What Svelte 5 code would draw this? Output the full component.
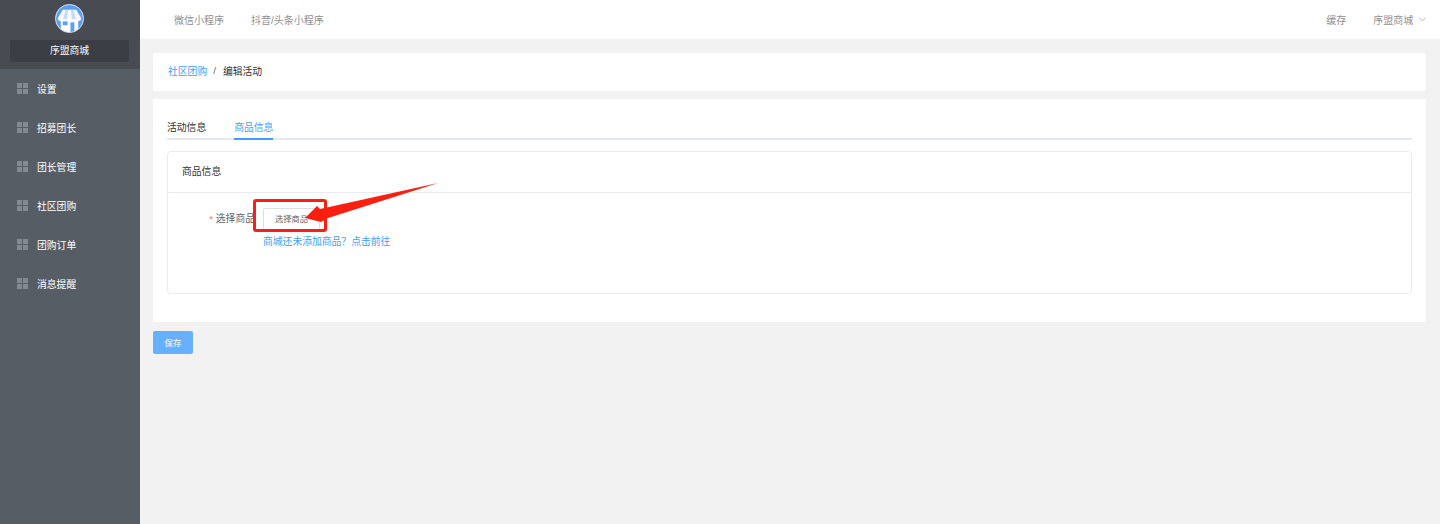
<script>
  const menu = ["设置", "招募团长", "团长管理", "社区团购", "团购订单", "消息提醒"];
</script>

<div class="layout">
  <aside class="sidebar">
    <div class="brand">
      <svg class="logo" width="29" height="29" viewBox="0 0 30 30">
        <defs>
          <clipPath id="round"><circle cx="15" cy="15" r="14" /></clipPath>
        </defs>
        <circle cx="15" cy="15" r="14.5" fill="#5a9ff5" stroke="#dfe3e8" />
        <g clip-path="url(#round)">
          <rect x="6" y="15" width="18" height="15" fill="#fff" />
          <path d="M8 6h14l5 8.500a3 3 0 0 1-6 .5 3 3 0 0 1-6 0 3 3 0 0 1-6 0 3 3 0 0 1-6-.5z" fill="#f6f9fe" />
          <path d="M11 6h2.500l-1 9.500h-4zM16.500 6H19l2.500 9.500h-4z" fill="#c5dafa" />
          <rect x="8" y="18" width="5" height="4" fill="#5a9ff5" />
          <rect x="16" y="19" width="4" height="11" fill="#5a9ff5" />
        </g>
      </svg>
      <div class="shop">序盟商城</div>
    </div>
    <nav>
      {#each menu as item}
        <div class="item">
          <span class="grid"><i></i><i></i><i></i><i></i></span>
          <span>{item}</span>
        </div>
      {/each}
    </nav>
  </aside>

  <div class="right">
    <header class="top">
      <div class="links">
        <span>微信小程序</span>
        <span>抖音/头条小程序</span>
      </div>
      <div class="user">
        <span>缓存</span>
        <span class="account">序盟商城
          <svg width="7" height="5" viewBox="0 0 8 5"><path d="M.5.5 4 4 7.5.5" fill="none" stroke="#a9b0bb" /></svg>
        </span>
      </div>
    </header>

    <main>
      <div class="crumb">
        <span class="link">社区团购</span>
        <span class="sep">/</span>
        <span>编辑活动</span>
      </div>

      <section class="panel">
        <div class="tabs">
          <span class="tab">活动信息</span>
          <span class="tab active">商品信息</span>
        </div>
        <div class="card">
          <div class="card-head">商品信息</div>
          <div class="card-body">
            <div class="label"><span class="star">*</span> 选择商品</div>
            <div class="field">
              <button class="pick" type="button">选择商品</button>
              <span class="link hint">商城还未添加商品？点击前往</span>
            </div>
            <div class="mark"></div>
            <svg class="arrow" width="140" height="42" viewBox="0 0 140 42">
              <path d="M134 0 16 26 13 23 1 35 17 39 24 35Z" fill="#fb1f12" />
            </svg>
          </div>
        </div>
      </section>

      <button class="save" type="button">保存</button>
    </main>
  </div>
</div>

<style>
  :global(body) {
    margin: 0;
    font-family: "Liberation Sans", "Noto Sans CJK SC", sans-serif;
  }
  .layout {
    display: flex;
    height: 524px;
    overflow: hidden;
    background: #f2f2f2;
    font-size: 9.8px;
  }
  .sidebar {
    width: 140px;
    flex: none;
    background: #565d64;
    color: #fff;
  }
  .brand {
    height: 69px;
    box-sizing: border-box;
    background: #484c52;
    padding: 4px 0 0 10px;
    display: flex;
    flex-direction: column;
    align-items: flex-start;
  }
  .logo {
    display: block;
    margin-left: 45px;
  }
  .shop {
    margin-top: 7px;
    width: 119px;
    height: 22px;
    line-height: 22px;
    border-radius: 2px;
    background: #3b3e44;
    text-align: center;
  }
  .item {
    height: 39px;
    display: flex;
    align-items: center;
    padding-left: 17px;
    gap: 9px;
  }
  .item span:last-child {
    margin-top: 1px;
  }
  .grid {
    width: 11px;
    display: grid;
    grid-template-columns: 5px 5px;
    gap: 1px;
    margin-top: -1px;
  }
  .grid i {
    height: 5px;
    background: #848a90;
  }
  .right {
    flex: 1;
    min-width: 0;
  }
  .top {
    height: 39px;
    background: #fff;
    display: flex;
    justify-content: space-between;
    align-items: center;
    padding: 0 14px 0 34px;
    color: #8c8f94;
    font-size: 10px;
  }
  .links {
    display: flex;
    gap: 27px;
  }
  .user {
    display: flex;
    gap: 27px;
  }
  .account svg {
    margin: 0 0 2px 3px;
  }
  main {
    padding: 14px 14px 0 13px;
  }
  .crumb {
    height: 38px;
    box-sizing: border-box;
    padding: 0 0 3px 15px;
    background: #fff;
    border-radius: 2px;
    display: flex;
    align-items: center;
    color: #303133;
  }
  .sep {
    margin: 0 7px 0 6px;
    color: #606266;
  }
  .link {
    color: #409eff;
  }
  .panel {
    margin-top: 8px;
    height: 223px;
    box-sizing: border-box;
    background: #fff;
    padding: 14px;
  }
  .tabs {
    height: 27px;
    display: flex;
    gap: 28px;
    border-bottom: 2px solid #e4e7ed;
    box-sizing: border-box;
  }
  .tab {
    height: 27px;
    line-height: 29px;
    color: #303133;
    box-sizing: border-box;
  }
  .active {
    color: #409eff;
    border-bottom: 2px solid #409eff;
  }
  .card {
    margin-top: 11px;
    height: 143px;
    box-sizing: border-box;
    border: 1px solid #e9ebf0;
    border-radius: 4px;
  }
  .card-head {
    height: 40px;
    line-height: 40px;
    padding-left: 14px;
    border-bottom: 1px solid #e9ebf0;
    color: #303133;
  }
  .card-body {
    position: relative;
    display: flex;
    padding-top: 15px;
  }
  .label {
    width: 87px;
    margin: 1px 8px 0 0;
    text-align: right;
    color: #606266;
    line-height: 20px;
  }
  .star {
    color: #f56c6c;
  }
  .field {
    display: flex;
    flex-direction: column;
    align-items: flex-start;
    gap: 4px;
  }
  .pick {
    width: 57px;
    height: 23px;
    padding: 0 0 3px;
    background: #fff;
    border: 1px solid #dcdfe6;
    border-radius: 2px;
    color: #606266;
    font: inherit;
    font-size: 8.2px;
    white-space: nowrap;
  }
  .hint {
    line-height: 14px;
  }
  .mark {
    position: absolute;
    left: 85px;
    top: 6px;
    width: 74px;
    height: 33px;
    box-sizing: border-box;
    border: 3px solid #fb1f12;
    border-radius: 3px;
  }
  .arrow {
    position: absolute;
    left: 136px;
    top: -10px;
  }
  .save {
    display: block;
    margin-top: 9px;
    width: 40px;
    height: 23px;
    padding: 0 0 2px;
    border: none;
    border-radius: 2px;
    background: #66b1ff;
    color: #fff;
    font: inherit;
    font-size: 8.5px;
  }
</style>
